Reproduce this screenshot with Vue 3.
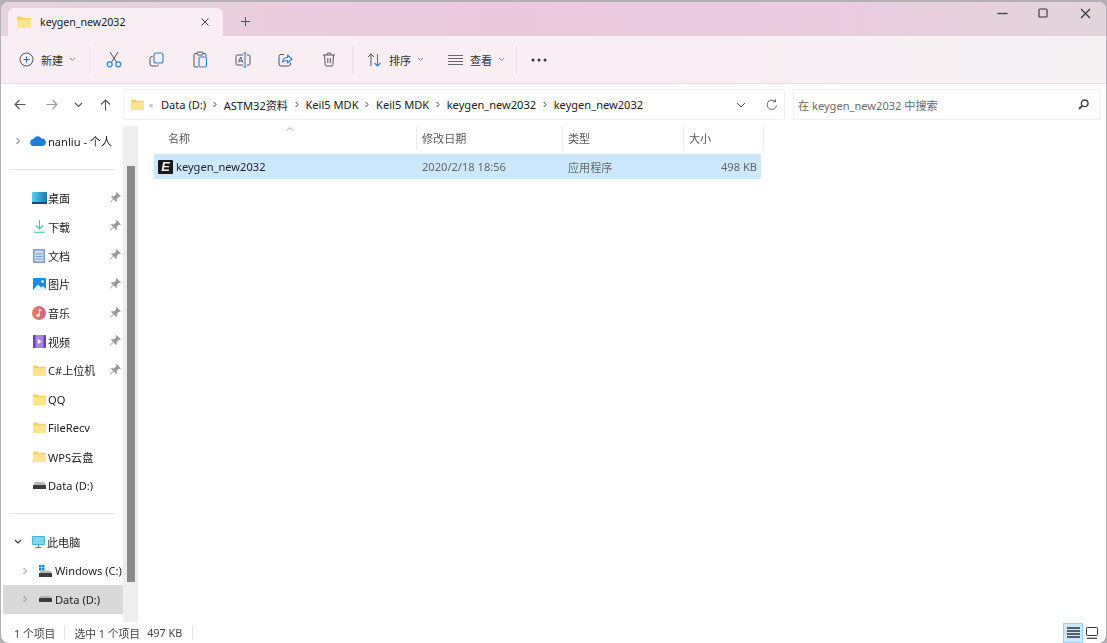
<script setup>
const crumbs = ['Data (D:)', 'ASTM32资料', 'Keil5 MDK', 'Keil5 MDK', 'keygen_new2032', 'keygen_new2032']
const quick = [
  { t: '桌面', i: 'desk', pin: true },
  { t: '下载', i: 'down', pin: true },
  { t: '文档', i: 'doc', pin: true },
  { t: '图片', i: 'pic', pin: true },
  { t: '音乐', i: 'music', pin: true },
  { t: '视频', i: 'video', pin: true },
  { t: 'C#上位机', i: 'folder', pin: true },
  { t: 'QQ', i: 'folder' },
  { t: 'FileRecv', i: 'folder' },
  { t: 'WPS云盘', i: 'folder' },
  { t: 'Data (D:)', i: 'drive' }
]
</script>

<template>
  <div class="win">
    <div class="titlebar">
      <div class="tab">
        <svg class="tabfolder" width="14" height="12" viewBox="0 0 14 12"><path d="M0 1.500Q0 .5 1 .5h3.500l1.500 1.500h7q1 0 1 1V11q0 1-1 1H1q-1 0-1-1z" fill="#f9d05e"/><path d="M0 3.500h14V11q0 1-1 1H1q-1 0-1-1z" fill="#fde58f"/></svg>
        <span class="tabtitle">keygen_new2032</span>
        <svg class="tabclose" width="10" height="10" viewBox="0 0 10 10"><path d="M1.500 1.500l7 7M8.500 1.500l-7 7" stroke="#444" stroke-width="1"/></svg>
      </div>
      <svg class="plus" width="11" height="11" viewBox="0 0 11 11"><path d="M5.500 1v9M1 5.500h9" stroke="#555" stroke-width="1"/></svg>
      <div class="spacer"></div>
      <div class="caption">
        <svg width="46" height="12" viewBox="0 0 46 12"><path d="M19.500 6.500h10" stroke="#444" stroke-width="1.400"/></svg>
        <svg width="38" height="12" viewBox="0 0 38 12"><rect x="15" y="2" width="8" height="8" rx="1" fill="none" stroke="#333" stroke-width="1.100"/></svg>
        <svg width="44" height="12" viewBox="0 0 44 12"><path d="M19 2l9 9M28 2l-9 9" stroke="#333" stroke-width="1.100"/></svg>
      </div>
    </div>

    <div class="cmdbar">
      <div class="newbtn">
        <svg width="15" height="15" viewBox="0 0 15 15"><circle cx="7.500" cy="7.500" r="6.500" fill="none" stroke="#555" stroke-width="1"/><path d="M7.500 4.500v6M4.500 7.500h6" stroke="#1678c8" stroke-width="1.100"/></svg>
        <span class="cmdtext">新建</span>
        <svg class="chev" width="7" height="5" viewBox="0 0 7 5"><path d="M1 1l2.500 2.500L6 1" fill="none" stroke="#888"/></svg>
      </div>
      <div class="sep"></div>
      <div class="iconbtn first">
        <svg width="16" height="17" viewBox="0 0 16 17"><path d="M4 1l6.300 10M12 1L5.700 11" fill="none" stroke="#555"/><circle cx="3.700" cy="13.300" r="2.500" fill="none" stroke="#2a83d0" stroke-width="1.200"/><circle cx="12.300" cy="13.300" r="2.500" fill="none" stroke="#2a83d0" stroke-width="1.200"/></svg>
      </div>
      <div class="iconbtn">
        <svg width="15" height="15" viewBox="0 0 15 15"><rect x="5" y="1" width="9" height="10" rx="2" fill="none" stroke="#2a83d0" stroke-width="1.100"/><path d="M3.500 4.500H3a2 2 0 0 0-2 2V12a2 2 0 0 0 2 2h4.500a2 2 0 0 0 2-1.500" fill="none" stroke="#555"/></svg>
      </div>
      <div class="iconbtn">
        <svg width="14" height="17" viewBox="0 0 14 17"><path d="M4 2.500H2a1 1 0 0 0-1 1V15a1 1 0 0 0 1 1h3M10 2.500h2a1 1 0 0 1 1 1v2" fill="none" stroke="#555"/><rect x="4" y="1" width="6" height="3" rx="1" fill="none" stroke="#555"/><rect x="6" y="6" width="7.500" height="10" rx="1.500" fill="none" stroke="#2a83d0" stroke-width="1.100"/></svg>
      </div>
      <div class="iconbtn">
        <svg width="16" height="16" viewBox="0 0 16 16"><path d="M8 3H2.500A1.500 1.500 0 0 0 1 4.500v7A1.500 1.500 0 0 0 2.500 13H8M12 3h1.500A1.500 1.500 0 0 1 15 4.500v7a1.500 1.500 0 0 1-1.500 1.500H12" fill="none" stroke="#555"/><path d="M3.500 10.500L5.700 5l2.200 5.500M4.300 9h3" fill="none" stroke="#555"/><path d="M8.500 1h3M8.500 15h3M10 1v14" fill="none" stroke="#2a83d0" stroke-width="1.100"/></svg>
      </div>
      <div class="iconbtn">
        <svg width="15" height="15" viewBox="0 0 15 15"><path d="M6 2.500H3A2 2 0 0 0 1 4.500V12a2 2 0 0 0 2 2h7.500a2 2 0 0 0 2-2v-1" fill="none" stroke="#555"/><path d="M4.500 10C5 7 7 5.500 9.500 5.500V3l4.500 4-4.500 4V8.500c-2 0-3.700.3-5 1.500z" fill="none" stroke="#2a83d0" stroke-width="1.100" stroke-linejoin="round"/></svg>
      </div>
      <div class="iconbtn">
        <svg width="14" height="15" viewBox="0 0 14 15"><path d="M1 3h12M5 3V2q0-1 1-1h2q1 0 1 1v1M2.500 3l.7 9.700q.1 1.300 1.400 1.300h4.800q1.300 0 1.400-1.300L11.500 3M5.800 6v5M8.200 6v5" fill="none" stroke="#555"/></svg>
      </div>
      <div class="sep s2"></div>
      <div class="textbtn sortbtn">
        <svg width="15" height="14" viewBox="0 0 15 14"><path d="M4 13V1M1 4l3-3 3 3" fill="none" stroke="#555"/><path d="M10.500 1v12M7.500 10l3 3 3-3" fill="none" stroke="#2a83d0" stroke-width="1.100"/></svg>
        <span class="cmdtext">排序</span>
        <svg class="chev" width="7" height="5" viewBox="0 0 7 5"><path d="M1 1l2.500 2.500L6 1" fill="none" stroke="#888"/></svg>
      </div>
      <div class="textbtn viewbtn">
        <svg width="15" height="10" viewBox="0 0 15 10"><path d="M0 .5h15M0 3.500h15M0 6.500h15M0 9.500h15" stroke="#666" stroke-width="1"/></svg>
        <span class="cmdtext">查看</span>
        <svg class="chev" width="7" height="5" viewBox="0 0 7 5"><path d="M1 1l2.500 2.500L6 1" fill="none" stroke="#888"/></svg>
      </div>
      <div class="sep s3"></div>
      <svg class="more" width="16" height="4" viewBox="0 0 16 4"><circle cx="2" cy="2" r="1.500" fill="#333"/><circle cx="8" cy="2" r="1.500" fill="#333"/><circle cx="14" cy="2" r="1.500" fill="#333"/></svg>
    </div>

    <div class="addrrow">
      <div class="navbtns">
        <svg width="12" height="11" viewBox="0 0 12 11"><path d="M11.500 5.500H1M5.500 1L1 5.500 5.500 10" fill="none" stroke="#555" stroke-width="1.100"/></svg>
        <svg class="fw" width="12" height="11" viewBox="0 0 12 11"><path d="M.5 5.500H11M6.500 1L11 5.500 6.500 10" fill="none" stroke="#999" stroke-width="1.100"/></svg>
        <svg class="dn" width="9" height="6" viewBox="0 0 9 6"><path d="M1 1l3.500 3.500L8 1" fill="none" stroke="#555" stroke-width="1.100"/></svg>
        <svg class="up" width="11" height="12" viewBox="0 0 11 12"><path d="M5.500 11.500V1M1 5.500L5.500 1 10 5.500" fill="none" stroke="#555" stroke-width="1.100"/></svg>
      </div>
      <div class="addr">
        <svg class="addrfolder" width="13" height="11" viewBox="0 0 14 12"><path d="M0 1.500Q0 .5 1 .5h3.500l1.500 1.500h7q1 0 1 1V11q0 1-1 1H1q-1 0-1-1z" fill="#f9d05e"/><path d="M0 3.500h14V11q0 1-1 1H1q-1 0-1-1z" fill="#fde58f"/></svg>
        <span class="dbl">«</span>
        <template v-for="(c, i) in crumbs" :key="i">
          <span class="crumb">{{ c }}</span>
          <svg v-if="i < crumbs.length - 1" class="crumbsep" width="4" height="7" viewBox="0 0 4 7"><path d="M.7 1L3 3.500.7 6" fill="none" stroke="#444"/></svg>
        </template>
        <div class="spacer"></div>
        <svg class="addrchev" width="10" height="6" viewBox="0 0 10 6"><path d="M1 1l4 4 4-4" fill="none" stroke="#555"/></svg>
        <svg class="refresh" width="12" height="12" viewBox="0 0 12 12"><path d="M10.500 6.500A4.700 4.700 0 1 1 9 2.300M9.500 .3v2.500H7" fill="none" stroke="#666"/></svg>
      </div>
      <div class="search">
        <span class="searchtext">在 keygen_new2032 中搜索</span>
        <svg width="11" height="11" viewBox="0 0 11 11"><circle cx="6.700" cy="4.300" r="3.300" fill="none" stroke="#444" stroke-width="1.400"/><path d="M4.300 6.700L1 10" stroke="#444" stroke-width="1.800"/></svg>
      </div>
    </div>

    <div class="body">
      <aside class="nav">
        <div class="navrow">
          <svg class="arrow" width="5" height="8" viewBox="0 0 5 8"><path d="M1 1l3 3-3 3" fill="none" stroke="#666"/></svg>
          <svg class="ico" width="16" height="10" viewBox="0 0 16 10"><path d="M4 10a3.500 3.500 0 0 1-.5-7A4.500 4.500 0 0 1 11.500 2.500 3.700 3.700 0 0 1 12.500 10z" fill="#1a7fd6"/></svg>
          <span class="navtext ml1">nanliu - 个人</span>
        </div>
        <div class="hr"></div>
        <div v-for="q in quick" :key="q.t" class="navrow">
          <span class="icowrap">
            <svg v-if="q.i === 'desk'" width="15" height="12" viewBox="0 0 15 12"><defs><linearGradient id="dk" x1="0" x2="1"><stop offset="0" stop-color="#5bd0ec"/><stop offset="1" stop-color="#1778b5"/></linearGradient></defs><rect width="15" height="11" rx="1" fill="url(#dk)"/><rect y="10" width="15" height="2" fill="#0d4f80"/></svg>
            <svg v-else-if="q.i === 'down'" width="11" height="13" viewBox="0 0 11 13"><path d="M5.500 0v9M2 5.500L5.500 9 9 5.500M0 12.300h11" fill="none" stroke="#3fc7a5" stroke-width="1.100"/></svg>
            <svg v-else-if="q.i === 'doc'" width="12" height="14" viewBox="0 0 12 14"><rect width="12" height="14" rx="1" fill="#7b9cc8"/><rect x="1.500" y="1.500" width="9" height="11" fill="#d0dcec"/><path d="M2.500 5h7M2.500 7.500h7M2.500 10h7" stroke="#7b9cc8"/></svg>
            <svg v-else-if="q.i === 'pic'" width="13" height="13" viewBox="0 0 13 13"><rect width="13" height="13" rx="1" fill="#1c8be0"/><path d="M0 12l5-5.500 3 3 2-1.500 3 3V13H0z" fill="#e6f4ff"/><circle cx="9.500" cy="3.500" r="1.300" fill="#e6f4ff"/></svg>
            <svg v-else-if="q.i === 'music'" width="14" height="14" viewBox="0 0 14 14"><defs><linearGradient id="ms" x1="0" x2="1"><stop offset="0" stop-color="#ef7d52"/><stop offset="1" stop-color="#c9648e"/></linearGradient></defs><circle cx="7" cy="7" r="7" fill="url(#ms)"/><circle cx="6" cy="9.500" r="1.700" fill="#fbe6e0"/><path d="M7.300 9.500V3.500l2.500 1" fill="none" stroke="#fbe6e0" stroke-width="1.100"/></svg>
            <svg v-else-if="q.i === 'video'" width="13" height="13" viewBox="0 0 13 13"><rect width="13" height="13" rx="1" fill="#6c3fc0"/><rect x="2.500" y="0" width="8" height="13" fill="#a586e4"/><path d="M4.800 4l4 2.500-4 2.500z" fill="#fff"/></svg>
            <svg v-else-if="q.i === 'folder'" width="13" height="11" viewBox="0 0 14 12"><path d="M0 1.500Q0 .5 1 .5h3.500l1.500 1.500h7q1 0 1 1V11q0 1-1 1H1q-1 0-1-1z" fill="#f9d05e"/><path d="M0 3.500h14V11q0 1-1 1H1q-1 0-1-1z" fill="#fde58f"/></svg>
            <svg v-else width="13" height="7" viewBox="0 0 13 7"><path d="M2 0h9l2 3H0z" fill="#b8b8b8"/><rect y="3" width="13" height="4" rx=".5" fill="#3d3d3d"/></svg>
          </span>
          <span class="navtext">{{ q.t }}</span>
          <svg v-if="q.pin" class="pin" width="11" height="11" viewBox="0 0 10 10"><path d="M6 0l4 4-1 .6-1-.3L6 6.500 6.300 8.500 5.500 9 3.300 6.700.5 9.500 0 9.500 0 9l2.800-2.800L1 4.500l.5-.8 2 .3L5.700 2l-.3-1z" fill="#9a9a9a"/></svg>
        </div>
        <div class="hr"></div>
        <div class="navrow pcrow">
          <svg class="arrow" width="8" height="5" viewBox="0 0 8 5"><path d="M1 1l3 3 3-3" fill="none" stroke="#333" stroke-width="1.100"/></svg>
          <svg class="ico pcico" width="13" height="12" viewBox="0 0 13 12"><rect width="13" height="9" rx="1" fill="#41b8d8"/><rect x="1" y="1" width="11" height="7" fill="#7dd6ea"/><path d="M6.500 9v2M3.500 11.500h6" stroke="#6a7a86" stroke-width="1.200"/></svg>
          <span class="navtext ml2">此电脑</span>
        </div>
        <div class="navrow sub">
          <svg class="arrow" width="5" height="8" viewBox="0 0 5 8"><path d="M1 1l3 3-3 3" fill="none" stroke="#888"/></svg>
          <svg class="ico" width="13" height="12" viewBox="0 0 13 12"><path d="M0 0h2.500v2.500H0zM3 0h2.500v2.500H3zM0 3h2.500v2.500H0zM3 3h2.500v2.500H3z" fill="#1a86d8"/><path d="M2 5.500h9l2 2.500H0z" fill="#b8b8b8"/><rect y="8" width="13" height="4" rx=".5" fill="#3d3d3d"/></svg>
          <span class="navtext ml3">Windows (C:)</span>
        </div>
        <div class="navrow sub sel">
          <svg class="arrow" width="5" height="8" viewBox="0 0 5 8"><path d="M1 1l3 3-3 3" fill="none" stroke="#888"/></svg>
          <svg class="ico" width="13" height="6" viewBox="0 0 13 6"><path d="M2 0h9l2 2H0z" fill="#b0b0b0"/><rect y="2" width="13" height="4" rx=".5" fill="#3d3d3d"/></svg>
          <span class="navtext ml3">Data (D:)</span>
        </div>
      </aside>
      <div class="track"><div class="thumb"></div></div>
      <main class="main">
        <div class="head">
          <svg class="caret" width="8" height="4" viewBox="0 0 8 4"><path d="M.5 3.500L4 .7l3.500 2.800" fill="none" stroke="#aaa"/></svg>
          <div class="hc hname">名称</div>
          <div class="hc hdate">修改日期</div>
          <div class="hc htype">类型</div>
          <div class="hc hsize">大小</div>
        </div>
        <div class="row">
          <div class="cname">
            <span class="exe">E</span>
            <span>keygen_new2032</span>
          </div>
          <div class="cell">2020/2/18 18:56</div>
          <div class="cell">应用程序</div>
          <div class="cell right">498 KB</div>
        </div>
      </main>
    </div>

    <div class="status">
      <span class="st">1 个项目</span>
      <span class="stsep"></span>
      <span class="st">选中 1 个项目</span>
      <span class="st st2">497 KB</span>
      <span class="stsep s2b"></span>
      <div class="spacer"></div>
      <div class="vbtn">
        <svg width="13" height="11" viewBox="0 0 13 11"><path d="M0 1h13M0 4h13M0 7h13M0 10h13" stroke="#333" stroke-width="1.300"/></svg>
      </div>
      <svg class="tiles" width="12" height="12" viewBox="0 0 12 12"><rect x=".5" y=".5" width="11" height="8" rx="1" fill="none" stroke="#333"/><path d="M1 11.300h10" stroke="#333" stroke-width="1.200"/></svg>
    </div>
  </div>
</template>

<style>
html, body { margin: 0; height: 100%; background: #b4afb2; overflow: hidden; }
</style>

<style scoped>
.win {
  box-sizing: border-box;
  width: 1105px;
  height: 641px;
  margin: 2px 0 0 1px;
  border-radius: 8px;
  overflow: hidden;
  background: #fff;
  display: flex;
  flex-direction: column;
  font-family: "Noto Sans", "Noto Sans CJK SC", sans-serif;
  font-size: 11.1px;
  color: #222;
  filter: blur(0.45px);
}
.spacer { flex: 1; }
.titlebar {
  height: 34px;
  flex: none;
  display: flex;
  align-items: flex-end;
  background: linear-gradient(90deg, #e7d2dd 0%, #ebc9dd 45%, #eaccdf 75%, #e2d5da 100%);
}
.tab {
  width: 215px;
  height: 28px;
  margin-left: 7px;
  box-sizing: border-box;
  padding-left: 9px;
  display: flex;
  align-items: center;
  background: #f9eef3;
  border-radius: 6px 6px 0 0;
  font-size: 10.600px;
}
.tabtitle { margin-left: 9px; flex: 1; }
.tabclose { margin-right: 13px; }
.plus { margin: 0 0 9px 17px; }
.caption { display: flex; align-self: flex-start; margin: 5px 0 0; align-items: center; }
.cmdbar {
  height: 48px;
  flex: none;
  display: flex;
  align-items: center;
  box-sizing: border-box;
  border-bottom: 1px solid #f1d9e2;
  background: linear-gradient(90deg, #f9eef3 0%, #f9eef3 60%, #f5f2f4 100%);
}
.newbtn { display: flex; align-items: center; margin-left: 18px; width: 70px; flex: none; }
.cmdtext { margin-left: 7px; color: #333; }
.chev { margin-left: 6px; }
.sep { width: 1px; height: 28px; background: #e9dfe4; flex: none; }
.iconbtn { width: 43px; display: flex; justify-content: center; flex: none; }
.iconbtn.first { margin-left: 2px; }
.s2 { margin-left: 2px; }
.textbtn { display: flex; align-items: center; flex: none; }
.sortbtn { margin-left: 14px; width: 78px; }
.viewbtn { margin-left: 3px; width: 72px; }
.s3 { margin-left: -4px; }
.more { margin-left: 14px; }
.addrrow {
  height: 42px;
  flex: none;
  display: flex;
  align-items: center;
  background: #fff;
  box-sizing: border-box;
  padding-bottom: 1px;
}
.navbtns { width: 122px; flex: none; display: flex; align-items: center; padding-left: 13px; box-sizing: border-box; }
.fw { margin-left: 20px; }
.dn { margin-left: 16px; }
.up { margin-left: 17px; }
.addr {
  width: 662px;
  height: 31px;
  flex: none;
  box-sizing: border-box;
  border: 1px solid #f0f0f0;
  display: flex;
  align-items: center;
  padding-left: 7px;
  border-radius: 2px;
}
.dbl { margin: 0 0 0 5px; width: 12px; color: #999; font-size: 8px; }
.crumb { color: #222; white-space: nowrap; }
.crumbsep { margin: 0 6.750px; flex: none; }
.addrchev { margin-right: 20px; }
.refresh { margin-right: 6px; }
.search {
  margin-left: 8px;
  width: 307px;
  height: 31px;
  flex: none;
  box-sizing: border-box;
  border: 1px solid #f0f0f0;
  border-radius: 2px;
  display: flex;
  align-items: center;
  justify-content: space-between;
  padding: 0 10px 0 4px;
}
.searchtext { color: #6b6b6b; }
.body { flex: 1; display: flex; min-height: 0; }
.nav { width: 122px; flex: none; padding-top: 1px; box-sizing: border-box; overflow: hidden; }
.navrow { height: 28.72px; display: flex; align-items: center; position: relative; padding-left: 13px; box-sizing: border-box; white-space: nowrap; }
.icowrap { width: 16px; display: flex; justify-content: center; margin-left: 17px; flex: none; }
.arrow { width: 8px; flex: none; }
.ico { flex: none; margin-left: 8px; }
.navtext { margin-left: 1px; }
.ml1 { margin-left: 2px; }
.ml2 { margin-left: 2px; }
.ml3 { margin-left: 3px; }
.pcico { margin-left: 10px; }
.pin { position: absolute; left: 109px; top: 8px; }
.hr { height: 1px; background: #e5e5e5; margin: 13px 7px 14px 9px; }
.sub { padding-left: 20px; }
.sub .ico { margin-left: 10px; }
.sel { background: #d9d9d9; margin-left: 2px; padding-left: 18px; }
.pcrow { margin-top: 2px; }
.track { width: 15px; flex: none; background: #eeeeee; padding-left: 4px; box-sizing: border-box; }
.thumb { width: 8px; height: 416px; margin-top: 40px; background: #8a8a8a; }
.main { flex: 1; padding-left: 16px; min-width: 0; }
.head {
  display: grid;
  grid-template-columns: 263px 146px 121px 80px;
  width: 610px;
  height: 24px;
  position: relative;
  color: #5a5a5a;
}
.caret { position: absolute; left: 132px; top: 1px; }
.hc { display: flex; align-items: center; padding-left: 5px; border-right: 1px solid #eaeaea; box-sizing: border-box; }
.hname { padding-left: 14px; }
.row {
  display: grid;
  grid-template-columns: 262px 146px 121px 78px;
  width: 607px;
  height: 25px;
  margin-top: 4px;
  background: #cce8ff;
  border-radius: 1px;
  color: #666;
  align-items: center;
}
.cname { display: flex; align-items: center; padding-left: 4px; color: #222; }
.exe {
  width: 15px; height: 14px; margin-right: 3px;
  background: #1a1a1a; color: #eee; border-radius: 1px;
  font: italic 700 13px/14px "Liberation Sans", sans-serif; text-align: center;
}
.cell { padding-left: 6px; }
.right { text-align: right; padding-right: 4px; }
.status { height: 21px; flex: none; display: flex; align-items: center; padding-left: 13px; color: #444; font-size: 10.800px; }
.stsep { width: 1px; height: 14px; background: #e5e5e5; margin: 0 9px; }
.st2 { margin-left: 7px; }
.s2b { margin-left: 10px; }
.vbtn { width: 20px; height: 20px; box-sizing: border-box; background: #cce8ff; border: 1px solid #99d1ff; display: flex; align-items: center; justify-content: center; margin-right: 3px; }
.tiles { margin-right: 8px; }
</style>
